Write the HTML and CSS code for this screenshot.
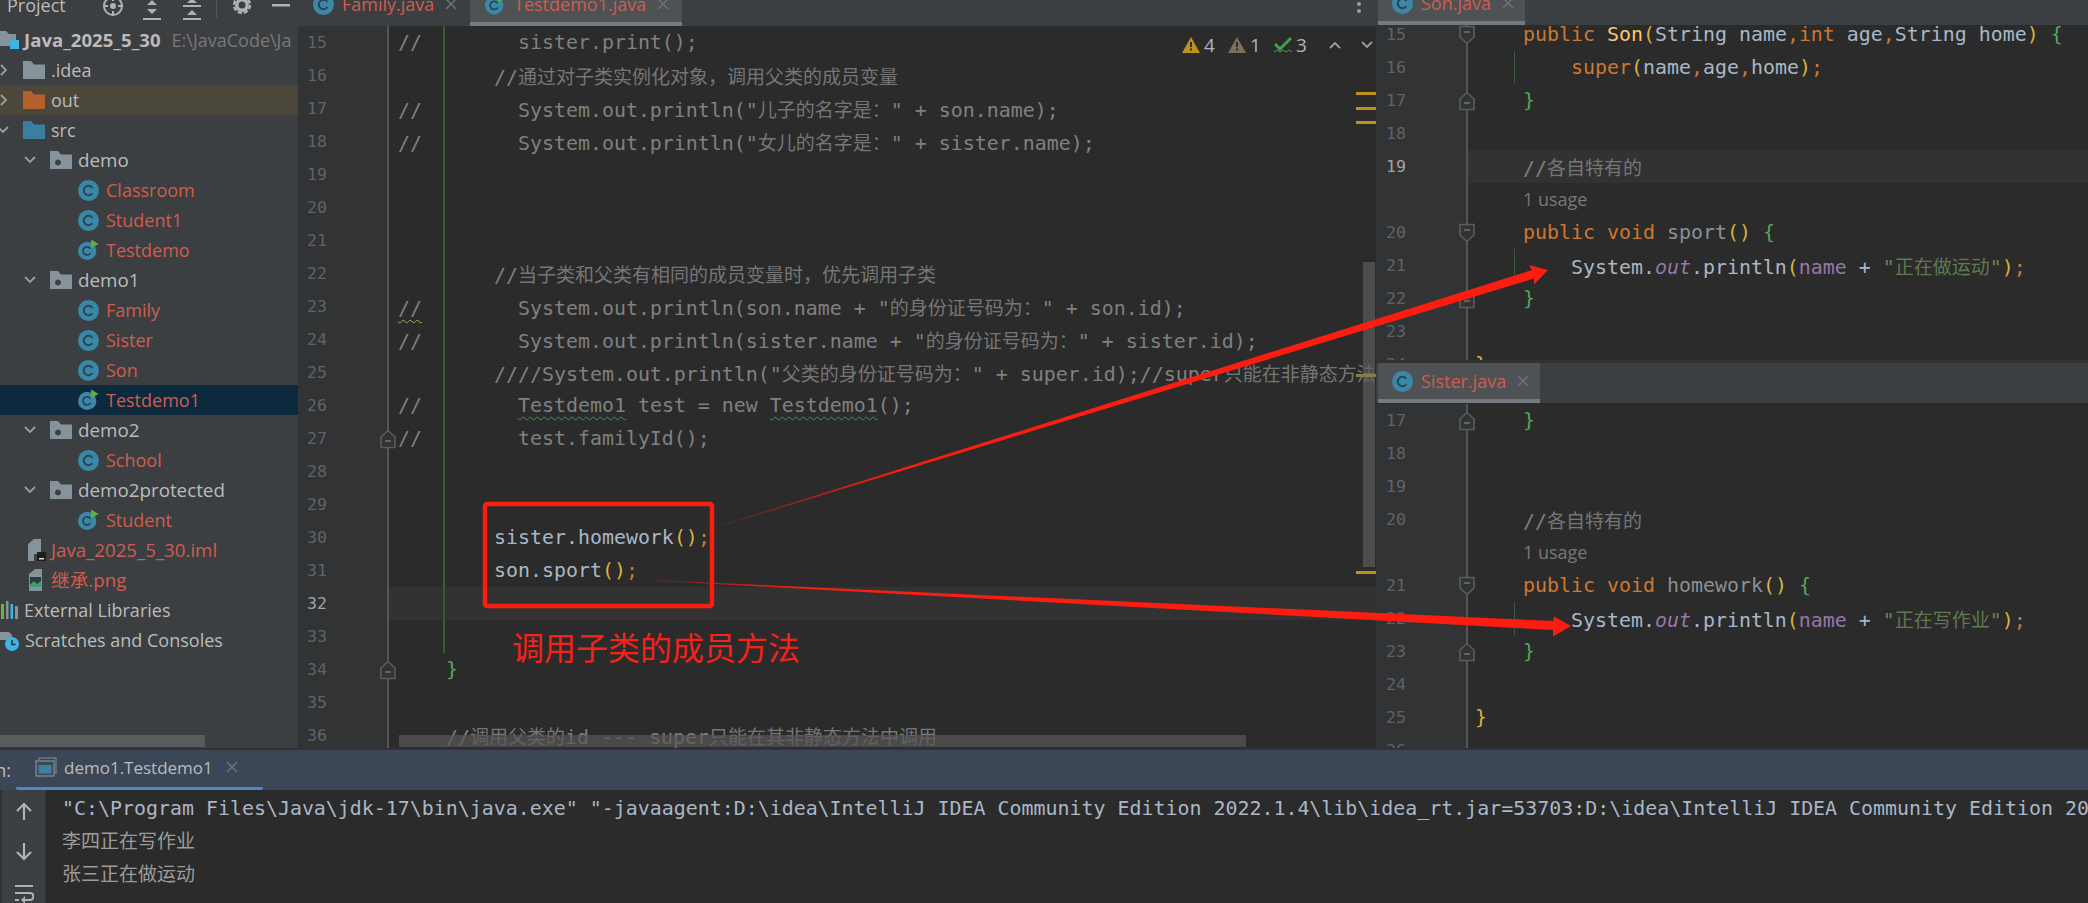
FILE: index.html
```html
<!DOCTYPE html>
<html lang="zh-CN">
<head>
<meta charset="utf-8">
<title>Java_2025_5_30</title>
<link rel="stylesheet" href="styles.css">
</head>
<body>
<svg class="defs" width="0" height="0" aria-hidden="true">
  <defs>
    <symbol id="cls" viewBox="0 0 21 21"><circle cx="10.5" cy="10.5" r="10.5" fill="#3a87a8"/><path d="M14.4 8a4.700 4.700 0 1 0 0 5" fill="none" stroke="#2a4655" stroke-width="2"/></symbol>
    <symbol id="clsrun" viewBox="0 0 24 24"><circle cx="10.5" cy="13" r="10.5" fill="#3a87a8"/><path d="M14.4 10.5a4.700 4.700 0 1 0 0 5" fill="none" stroke="#2a4655" stroke-width="2"/><path d="M15 0l8.500 5-8.500 5z" fill="#5fb13c"/></symbol>
    <symbol id="folder" viewBox="0 0 22 18"><path d="M0 0h8l3 3.500h11V18H0z"/></symbol>
    <symbol id="pkg" viewBox="0 0 22 18"><path fill-rule="evenodd" fill="#87939a" d="M0 0h8l3 3.500h11V18H0zM8 8.500a3 3 0 1 0 .01 0z"/></symbol>
    <symbol id="foldstart" viewBox="0 0 16 20"><path d="M1 1.500h14v10.500l-7 6.500-7-6.500z" fill="#313335" stroke="#5a5c5e" stroke-width="1.600"/><path d="M5 7h6" stroke="#6d6f71" stroke-width="1.600"/></symbol>
    <symbol id="foldend" viewBox="0 0 16 20"><path d="M1 18.500h14V8L8 1.500 1 8z" fill="#313335" stroke="#5a5c5e" stroke-width="1.600"/><path d="M5 12h6" stroke="#6d6f71" stroke-width="1.600"/></symbol>
    <symbol id="close" viewBox="0 0 12 12"><path d="M1 1l10 10M11 1L1 11" stroke="#6e7173" stroke-width="1.500"/></symbol>
    <symbol id="down" viewBox="0 0 12 8"><path d="M1 1l5 5 5-5" fill="none" stroke="#9a9da0" stroke-width="1.800"/></symbol>
    <symbol id="right" viewBox="0 0 8 12"><path d="M1 1l5 5-5 5" fill="none" stroke="#9a9da0" stroke-width="1.800"/></symbol>
    <symbol id="warn" viewBox="0 0 18 16"><path d="M9 0l9 16H0z"/><path d="M8 5h2v5H8zM8 11.500h2v2H8z" fill="#2b2b2b"/></symbol>
  </defs>
</svg>

<div class="app">
  <div class="workspace">
    <aside class="sidebar">
      <div class="side-head">
        <span class="side-title">Project</span>
        <svg class="ti t-target" width="22" height="22" viewBox="0 0 22 22"><circle cx="11" cy="11" r="9" fill="none" stroke="#afb1b3" stroke-width="2"/><circle cx="11" cy="11" r="3" fill="#afb1b3"/><path d="M11 1v5M11 16v5M1 11h5M16 11h5" stroke="#afb1b3" stroke-width="2"/></svg>
        <svg class="ti t-col" width="18" height="22" viewBox="0 0 18 22"><path d="M9 0l5 5H4zM9 14l-5-5h10zM0 18h18v2H0z" fill="#afb1b3"/></svg>
        <svg class="ti t-exp" width="18" height="22" viewBox="0 0 18 22"><path d="M0 5h18v2H0zM4 3h10L9-2zM9 10l5 5H4zM0 18h18v2H0z" fill="#afb1b3"/></svg>
        <span class="t-sep"></span>
        <svg class="ti t-gear" width="18" height="22" viewBox="0 0 18 22"><circle cx="9" cy="5" r="5.200" fill="none" stroke="#afb1b3" stroke-width="3.400"/><circle cx="9" cy="5" r="8" fill="none" stroke="#afb1b3" stroke-width="2.400" stroke-dasharray="4.300 2"/></svg>
        <svg class="ti t-min" width="18" height="22" viewBox="0 0 18 22"><path d="M0 4h18v2.500H0z" fill="#afb1b3"/></svg>
      </div>
      <div class="tree">
        <div class="node root"><svg class="ic-root" width="20" height="22" viewBox="0 0 20 22"><path d="M-2 2h8l3 3h7v12H-2z" fill="#87939a"/><rect x="10" y="11" width="9" height="9" fill="#3bb4e6"/></svg><span class="bold">Java_2025_5_30</span><span class="path">E:\JavaCode\Ja</span></div>
        <div class="node d1"><svg class="chev-r" width="8" height="12"><use href="#right"/></svg><svg class="fld f-grey" width="22" height="18"><use href="#folder"/></svg><span>.idea</span></div>
        <div class="node d1 excluded"><svg class="chev-r" width="8" height="12"><use href="#right"/></svg><svg class="fld f-orange" width="22" height="18"><use href="#folder"/></svg><span>out</span></div>
        <div class="node d1"><svg class="chev-d0" width="12" height="8"><use href="#down"/></svg><svg class="fld f-blue" width="22" height="18"><use href="#folder"/></svg><span>src</span></div>
        <div class="node d2"><svg class="chev-d" width="12" height="8"><use href="#down"/></svg><svg class="fld" width="22" height="18"><use href="#pkg"/></svg><span>demo</span></div>
        <div class="node d3"><svg class="cl" width="21" height="21"><use href="#cls"/></svg><span class="red">Classroom</span></div>
        <div class="node d3"><svg class="cl" width="21" height="21"><use href="#cls"/></svg><span class="red">Student1</span></div>
        <div class="node d3"><svg class="cl run" width="24" height="24"><use href="#clsrun"/></svg><span class="red">Testdemo</span></div>
        <div class="node d2"><svg class="chev-d" width="12" height="8"><use href="#down"/></svg><svg class="fld" width="22" height="18"><use href="#pkg"/></svg><span>demo1</span></div>
        <div class="node d3"><svg class="cl" width="21" height="21"><use href="#cls"/></svg><span class="red">Family</span></div>
        <div class="node d3"><svg class="cl" width="21" height="21"><use href="#cls"/></svg><span class="red">Sister</span></div>
        <div class="node d3"><svg class="cl" width="21" height="21"><use href="#cls"/></svg><span class="red">Son</span></div>
        <div class="node d3 selected"><svg class="cl run" width="24" height="24"><use href="#clsrun"/></svg><span class="red">Testdemo1</span></div>
        <div class="node d2"><svg class="chev-d" width="12" height="8"><use href="#down"/></svg><svg class="fld" width="22" height="18"><use href="#pkg"/></svg><span>demo2</span></div>
        <div class="node d3"><svg class="cl" width="21" height="21"><use href="#cls"/></svg><span class="red">School</span></div>
        <div class="node d2"><svg class="chev-d" width="12" height="8"><use href="#down"/></svg><svg class="fld" width="22" height="18"><use href="#pkg"/></svg><span>demo2protected</span></div>
        <div class="node d3"><svg class="cl run" width="24" height="24"><use href="#clsrun"/></svg><span class="red">Student</span></div>
        <div class="node file"><svg class="fi" width="20" height="24" viewBox="0 0 20 24"><path d="M2 6l6-5h7v15H8v7H2z" fill="#87939a"/><rect x="11" y="14" width="9" height="9" fill="#1e1e1e"/><path d="M13 20h5v1.500h-5z" fill="#ddd"/></svg><span class="red">Java_2025_5_30.iml</span></div>
        <div class="node file"><svg class="fi" width="20" height="24" viewBox="0 0 20 24"><path d="M2 6l6-5h7v22H2z" fill="#87939a" transform="translate(1)"/><rect x="4" y="9" width="11" height="10" fill="#2b3a3f"/><path d="M4 17l4-4 3 3 4-3v6H4z" fill="#3f9f6f"/></svg><span class="red cjk-side">继承.png</span></div>
        <div class="node top-item"><svg class="ext" width="18" height="18" viewBox="0 0 18 18"><path d="M1 3h3v15H1z" fill="#6eb23c"/><path d="M6 0h2.500v18H6z" fill="#87939a"/><path d="M10.500 3H13v15h-2.500z" fill="#3bb4e6"/><path d="M15 5h3v13h-3z" fill="#87939a"/></svg><span>External Libraries</span></div>
        <div class="node top-item"><svg class="ext" width="19" height="22" viewBox="0 0 19 22"><path d="M-1 3h10l3 3v5H-1z" fill="#87939a"/><circle cx="12" cy="15" r="7" fill="#3bb4e6"/><path d="M12 11v4.500h3.500" fill="none" stroke="#2b2b2b" stroke-width="1.500"/></svg><span>Scratches and Consoles</span></div>
      </div>
      <div class="side-hscroll"></div>
    </aside>

    <section class="main-editor">
      <div class="tabbar main-tabs">
        <div class="tab tab-family"><svg class="tab-ic" width="21" height="21"><use href="#cls"/></svg><span class="red">Family.java</span><svg class="tab-x" width="12" height="12"><use href="#close"/></svg></div>
        <div class="tab tab-test on"><svg class="tab-ic" width="21" height="21"><use href="#clsrun"/></svg><span class="red">Testdemo1.java</span><svg class="tab-x" width="12" height="12"><use href="#close"/></svg></div>
        <svg class="dots" width="6" height="14" viewBox="0 0 6 14"><circle cx="3" cy="3" r="2" fill="#9a9da0"/><circle cx="3" cy="10" r="2" fill="#9a9da0"/></svg>
      </div>
      <div class="code-view main-view">
        <div class="row guide"><div class="gut">15</div><div class="code com">//        sister.print();</div></div>
        <div class="row guide"><div class="gut">16</div><div class="code com">        //<span class="c">通过对子类实例化对象，调用父类的成员变量</span></div></div>
        <div class="row guide"><div class="gut">17</div><div class="code com">//        System.out.println("<span class="c">儿子的名字是：</span>" + son.name);</div></div>
        <div class="row guide"><div class="gut">18</div><div class="code com">//        System.out.println("<span class="c">女儿的名字是：</span>" + sister.name);</div></div>
        <div class="row guide"><div class="gut">19</div><div class="code"></div></div>
        <div class="row guide"><div class="gut">20</div><div class="code"></div></div>
        <div class="row guide"><div class="gut">21</div><div class="code"></div></div>
        <div class="row guide"><div class="gut">22</div><div class="code com">        //<span class="c">当子类和父类有相同的成员变量时，优先调用子类</span></div></div>
        <div class="row guide"><div class="gut">23</div><div class="code com"><span class="wy">//</span>        System.out.println(son.name + "<span class="c">的身份证号码为：</span>" + son.id);</div></div>
        <div class="row guide"><div class="gut">24</div><div class="code com">//        System.out.println(sister.name + "<span class="c">的身份证号码为：</span>" + sister.id);</div></div>
        <div class="row guide"><div class="gut">25</div><div class="code com">        ////System.out.println("<span class="c">父类的身份证号码为：</span>" + super.id);//super<span class="c">只能在非静态方法中调用</span></div></div>
        <div class="row guide"><div class="gut">26</div><div class="code com">//        <span class="wg">Testdemo1</span> test = new <span class="wg">Testdemo1</span>();</div></div>
        <div class="row guide"><div class="gut">27<svg class="fold" width="16" height="20"><use href="#foldend"/></svg></div><div class="code com">//        test.familyId();</div></div>
        <div class="row guide"><div class="gut">28</div><div class="code"></div></div>
        <div class="row guide"><div class="gut">29</div><div class="code"></div></div>
        <div class="row guide"><div class="gut">30</div><div class="code">        sister.homework<span class="y">()</span><span class="k">;</span></div></div>
        <div class="row guide"><div class="gut">31</div><div class="code">        son.sport<span class="y">()</span><span class="k">;</span></div></div>
        <div class="row guide cur"><div class="gut">32</div><div class="code"></div></div>
        <div class="row guide"><div class="gut">33</div><div class="code"></div></div>
        <div class="row"><div class="gut">34<svg class="fold" width="16" height="20"><use href="#foldend"/></svg></div><div class="code">    <span class="g">}</span></div></div>
        <div class="row"><div class="gut">35</div><div class="code"></div></div>
        <div class="row"><div class="gut">36</div><div class="code com">    //<span class="c">调用父类的</span>id --- super<span class="c">只能在其非静态方法中调用</span></div></div>
      </div>
      <div class="inspect">
        <svg class="w-y" width="18" height="16"><use href="#warn"/></svg><span class="cnt c4">4</span>
        <svg class="w-b" width="18" height="16"><use href="#warn"/></svg><span class="cnt c1">1</span>
        <svg class="chk" width="18" height="19" viewBox="0 0 18 19"><path d="M1 8l5 5L17 2" fill="none" stroke="#499c54" stroke-width="3"/><path d="M0 16l3-2 3 2 3-2 3 2 3-2 3 2" fill="none" stroke="#499c54" stroke-width="1"/></svg><span class="cnt c3">3</span>
        <svg class="ch-up" width="12" height="8" viewBox="0 0 12 8"><path d="M1 7l5-5 5 5" fill="none" stroke="#9a9da0" stroke-width="1.800"/></svg>
        <svg class="ch-dn" width="12" height="8"><use href="#down"/></svg>
      </div>
      <span class="mark m1"></span><span class="mark m2"></span><span class="mark m3"></span><span class="mark m4"></span><span class="mark m5"></span>
      <div class="vthumb"></div>
      <div class="hthumb"></div>
    </section>

    <section class="right-col">
      <div class="split split-top">
        <div class="tabbar right-tabs">
          <div class="tab tab-son on"><svg class="tab-ic" width="21" height="21"><use href="#cls"/></svg><span class="red">Son.java</span><svg class="tab-x" width="12" height="12"><use href="#close"/></svg></div>
        </div>
        <div class="code-view side-view">
          <div class="inner up">
            <div class="row"><div class="gut">15<svg class="fold" width="16" height="20"><use href="#foldstart"/></svg></div><div class="code">    <span class="k">public</span> <span class="m">Son</span><span class="y">(</span>String name<span class="k">,</span><span class="k">int</span> age<span class="k">,</span>String home<span class="y">)</span> <span class="g">{</span></div></div>
            <div class="row"><div class="gut">16</div><div class="code chg">        <span class="k">super</span><span class="y">(</span>name<span class="k">,</span>age<span class="k">,</span>home<span class="y">)</span><span class="k">;</span></div></div>
            <div class="row"><div class="gut">17<svg class="fold" width="16" height="20"><use href="#foldend"/></svg></div><div class="code">    <span class="g">}</span></div></div>
            <div class="row"><div class="gut">18</div><div class="code"></div></div>
            <div class="row cur"><div class="gut">19</div><div class="code com">    //<span class="c">各自特有的</span></div></div>
            <div class="row"><div class="gut"></div><div class="code">    <span class="usage">1 usage</span></div></div>
            <div class="row"><div class="gut">20<svg class="fold" width="16" height="20"><use href="#foldstart"/></svg></div><div class="code">    <span class="k">public</span> <span class="k">void</span> <span class="dim">sport</span><span class="y">()</span> <span class="g">{</span></div></div>
            <div class="row"><div class="gut">21</div><div class="code chg">        System.<span class="f fi-out">out</span>.println<span class="y">(</span><span class="f">name</span> + <span class="s">"<span class="c">正在做运动</span>"</span><span class="y">)</span><span class="k">;</span></div></div>
            <div class="row"><div class="gut">22<svg class="fold" width="16" height="20"><use href="#foldend"/></svg></div><div class="code">    <span class="g">}</span></div></div>
            <div class="row"><div class="gut">23</div><div class="code"></div></div>
            <div class="row"><div class="gut">24</div><div class="code"><span class="y">}</span></div></div>
          </div>
        </div>
      </div>
      <div class="split split-bottom">
        <div class="tabbar right-tabs tall">
          <div class="tab tab-sister on"><svg class="tab-ic" width="21" height="21"><use href="#cls"/></svg><span class="red">Sister.java</span><svg class="tab-x" width="12" height="12"><use href="#close"/></svg></div>
        </div>
        <div class="code-view side-view">
          <div class="inner down">
            <div class="row"><div class="gut">17<svg class="fold" width="16" height="20"><use href="#foldend"/></svg></div><div class="code">    <span class="g">}</span></div></div>
            <div class="row"><div class="gut">18</div><div class="code"></div></div>
            <div class="row"><div class="gut">19</div><div class="code"></div></div>
            <div class="row"><div class="gut">20</div><div class="code com">    //<span class="c">各自特有的</span></div></div>
            <div class="row"><div class="gut"></div><div class="code">    <span class="usage">1 usage</span></div></div>
            <div class="row"><div class="gut">21<svg class="fold" width="16" height="20"><use href="#foldstart"/></svg></div><div class="code">    <span class="k">public</span> <span class="k">void</span> <span class="dim">homework</span><span class="y">()</span> <span class="g">{</span></div></div>
            <div class="row"><div class="gut">22</div><div class="code chg">        System.<span class="f fi-out">out</span>.println<span class="y">(</span><span class="f">name</span> + <span class="s">"<span class="c">正在写作业</span>"</span><span class="y">)</span><span class="k">;</span></div></div>
            <div class="row"><div class="gut">23<svg class="fold" width="16" height="20"><use href="#foldend"/></svg></div><div class="code">    <span class="g">}</span></div></div>
            <div class="row"><div class="gut">24</div><div class="code"></div></div>
            <div class="row"><div class="gut">25</div><div class="code"><span class="y">}</span></div></div>
            <div class="row"><div class="gut">26</div><div class="code"></div></div>
          </div>
        </div>
      </div>
    </section>
  </div>

  <section class="run-panel">
    <div class="run-tabs">
      <span class="run-label">Run:</span>
      <div class="run-tab">
        <svg width="22" height="20" viewBox="0 0 22 20"><path d="M4 3V1h17v15h-2" fill="none" stroke="#6e7880" stroke-width="1.500"/><rect x="1" y="4" width="18" height="15" fill="#3a4a55" stroke="#76828a" stroke-width="1.500"/><rect x="3.500" y="8" width="13" height="8.500" fill="#3f7f9f"/></svg>
        <span class="run-name">demo1.Testdemo1</span>
        <svg class="tab-x" width="12" height="12"><use href="#close"/></svg>
      </div>
    </div>
    <div class="run-body">
      <div class="run-tools">
        <svg width="16" height="18" viewBox="0 0 16 18"><path d="M8 18V2M1 9l7-7 7 7" fill="none" stroke="#afb1b3" stroke-width="2.200"/></svg>
        <svg width="16" height="18" viewBox="0 0 16 18"><path d="M8 0v16M1 9l7 7 7-7" fill="none" stroke="#afb1b3" stroke-width="2.200"/></svg>
        <svg width="20" height="20" viewBox="0 0 20 20"><path d="M1 2h18M1 9h15a3 3 0 0 1 0 7H9M1 16h4" fill="none" stroke="#afb1b3" stroke-width="2.200"/><path d="M11 12l-4 4 4 4z" fill="#afb1b3"/></svg>
      </div>
      <div class="console">
        <div class="cline">"C:\Program Files\Java\jdk-17\bin\java.exe" "-javaagent:D:\idea\IntelliJ IDEA Community Edition 2022.1.4\lib\idea_rt.jar=53703:D:\idea\IntelliJ IDEA Community Edition 2022.1.4\bin"</div>
        <div class="cline c">李四正在写作业</div>
        <div class="cline c">张三正在做运动</div>
      </div>
    </div>
  </section>
</div>

<svg class="annot" width="2088" height="903" viewBox="0 0 2088 903" aria-hidden="true">
  <defs>
    <linearGradient id="fade1" gradientUnits="userSpaceOnUse" x1="719" y1="526" x2="900" y2="470"><stop offset="0" stop-color="#fb1d10" stop-opacity=".25"/><stop offset="1" stop-color="#fb1d10"/></linearGradient>
    <linearGradient id="fade2" gradientUnits="userSpaceOnUse" x1="652" y1="580" x2="800" y2="587"><stop offset="0" stop-color="#fb1d10" stop-opacity=".3"/><stop offset="1" stop-color="#fb1d10"/></linearGradient>
  </defs>
  <rect x="485" y="504" width="227" height="102" rx="2" fill="none" stroke="#fb1d10" stroke-width="4.500"/>
  <polygon points="719,526 1532,270 1529,265 1548,270 1534,284.500 1534,278.500 719,526.500" fill="url(#fade1)"/>
  <polygon points="652,580 1553,621 1554,616.500 1571,626 1553,636.500 1553,630 652,580.500" fill="url(#fade2)"/>
</svg>
<div class="note">调用子类的成员方法</div>
</body>
</html>
```
FILE: styles.css
```css
* { box-sizing: border-box; }
html, body { margin: 0; padding: 0; width: 2088px; height: 903px; overflow: hidden; background: #2b2b2b; }
body { position: relative; font-family: "Open Sans", "Noto Sans CJK SC", sans-serif; color: #bbbbbb; }
.defs { position: absolute; }
.app { display: flex; flex-direction: column; width: 2088px; height: 903px; }
.workspace { display: flex; height: 750px; background: #323232; }

/* Project sidebar */
.sidebar { width: 298px; height: 748px; background: #3c3f41; position: relative; overflow: hidden; font-size: 18px; flex: none; }
.side-head { height: 25px; display: flex; align-items: flex-start; position: relative; overflow: hidden; }
.side-title { margin: -9px 0 0 7px; line-height: 28px; width: 95px; font-size: 18px; }
.ti { flex: none; margin-top: -5px; overflow: visible; }
.t-col { margin-left: 19px; margin-top: 0; }
.t-exp { margin-left: 22px; margin-top: 0; }
.t-target { margin-top: -5px; }
.t-sep { width: 1px; height: 18px; background: #55585a; margin-left: 15px; flex: none; }
.t-gear { margin-left: 16px; margin-top: 0; }
.t-min { margin-left: 21px; margin-top: 0; }
.tree { display: flex; flex-direction: column; }
.node { height: 30px; display: flex; align-items: center; white-space: pre; line-height: 30px; flex: none; }
.node svg { flex: none; }
.red { color: #d05c50; }
.bold { font-weight: 700; font-size: 18.600px; margin-left: 4px; }
.path { color: #787878; margin-left: 11px; }
.root { padding-left: 0; }
.d1 { padding-left: 0; }
.chev-r { margin-left: 0; margin-right: 15px; }
.chev-d0 { margin-left: -3px; margin-right: 14px; }
.d1 span { margin-left: 6px; }
.d2 { padding-left: 24px; }
.chev-d { margin-right: 14px; }
.d2 span { margin-left: 6px; font-size: 18.800px; }
.d3 { padding-left: 78px; }
.d3 span { margin-left: 7px; }
.d3 .cl { width: 21px; }
.d3 .run { width: 21px; height: 24px; overflow: visible; }
.f-grey { fill: #87939a; }
.f-orange { fill: #b5602d; }
.f-blue { fill: #3a7f9f; }
.excluded { background: #4b473b; }
.selected { background: #0d293e; }
.file { padding-left: 26px; }
.file span { margin-left: 5px; font-size: 18.700px; }
.top-item { padding-left: 0; }
.top-item span { margin-left: 6px; }
.side-hscroll { position: absolute; left: 0; top: 735px; width: 205px; height: 12px; background: #5a5b5c; }

/* Tabs */
.tabbar { background: #3c3f41; display: flex; overflow: hidden; position: relative; flex: none; }
.main-tabs { height: 26px; }
.right-tabs { height: 25px; padding-left: 2px; }
.right-tabs.tall { height: 40px; }
.tab { height: 40px; flex: none; display: flex; align-items: center; padding-bottom: 4px; font-size: 18px; }
.main-tabs .tab { margin-top: -14px; }
.split-top .tab { margin-top: -15px; }
.tab.on { background: #4e5254; border-bottom: 4px solid #747a80; padding-bottom: 0; }
.tab-ic { margin-right: 8px; flex: none; overflow: visible; }
.tab-x { margin-left: 11px; flex: none; }
.tab-family { width: 172px; padding-left: 15px; }
.tab-test { width: 212px; padding-left: 15px; }
.tab-son { width: 147px; padding-left: 14px; }
.tab-sister { width: 162px; padding-left: 14px; }
.dots { position: absolute; left: 1058px; top: 1px; }

/* Code */
.main-editor { width: 1078px; height: 748px; position: relative; overflow: hidden; background: #2b2b2b; flex: none; }
.right-col { width: 712px; height: 748px; display: flex; flex-direction: column; gap: 3px; flex: none; }
.split { display: flex; flex-direction: column; overflow: hidden; background: #2b2b2b; }
.split-top { height: 360px; }
.split-bottom { height: 385px; }
.code-view { overflow: hidden; background: #2b2b2b; flex: 1; }
.main-view { height: 722px; }
.inner.up { margin-top: -7px; }
.inner.down { margin-top: 1px; }
.row { display: flex; height: 33px; font-family: "DejaVu Sans Mono", "Noto Sans CJK SC", monospace; font-size: 19.930px; line-height: 33px; color: #a9b7c6; white-space: pre; }
.gut { position: relative; flex: none; background: #313335; border-right: 2px solid #555555; color: #606366; font-size: 16.600px; }
.main-view .gut { width: 91px; padding-left: 9px; }
.side-view .gut { width: 92px; padding-left: 10px; }
.code { flex: 1; min-width: 0; overflow: visible; background-repeat: no-repeat; }
.main-view .code { padding-left: 9px; }
.side-view .code { padding-left: 7px; }
.guide .code { background-image: linear-gradient(#3c5a3a, #3c5a3a); background-size: 2px 100%; background-position: 54px 0; }
.chg { background-image: linear-gradient(#3c5a3a, #3c5a3a); background-size: 1px 100%; background-position: 46px 0; }
.cur .code { background-color: #323232; }
.cur .gut { color: #a4a3a3; }
.fold { position: absolute; right: -9px; top: 7px; }
.com { color: #808080; }
.c { font-family: "Noto Sans CJK SC", sans-serif; font-size: 19px; }
.com .c { color: #767676; }
.k { color: #cc7832; }
.y { color: #d9b23c; }
.g { color: #54a857; }
.m { color: #ffc66d; }
.f { color: #9876aa; }
.fi-out { font-style: italic; }
.s { color: #6a8759; }
.s .c { color: #5f7a50; }
.dim { color: #8a9095; }
.usage { font-family: "Open Sans", sans-serif; font-size: 18px; color: #787878; }
.wy { text-decoration: underline wavy #a8a860 1px; text-underline-offset: 4px; }
.wg { text-decoration: underline wavy #3f9a4c 1px; text-underline-offset: 4px; }

/* Inspection widget and stripes */
.inspect { position: absolute; left: 884px; top: 36px; display: flex; align-items: center; height: 18px; font-size: 19px; color: #a9b7c6; }
.inspect svg { flex: none; }
.w-y { fill: #be9117; }
.w-b { fill: #7b7058; margin-left: 13px; }
.chk { margin-left: 13px; }
.cnt { margin-left: 4px; line-height: 18px; width: 11px; font-family: "Open Sans", sans-serif; }
.ch-up { margin-left: 22px; }
.ch-dn { margin-left: 20px; }
.mark { position: absolute; left: 1058px; width: 20px; height: 3px; background: #be9117; z-index: 2; }
.m1 { top: 92px; }
.m2 { top: 107px; }
.m3 { top: 121px; }
.m4 { top: 374px; background: #8a7a4e; }
.m5 { top: 571px; }
.vthumb { position: absolute; left: 1065px; top: 262px; width: 12px; height: 305px; background: rgba(93, 93, 93, .7); z-index: 1; }
.hthumb { position: absolute; left: 101px; top: 735px; width: 847px; height: 12px; background: rgba(88, 88, 88, .7); }

/* Run panel */
.run-panel { height: 153px; display: flex; flex-direction: column; overflow: hidden; flex: none; }
.run-tabs { height: 40px; background: #3b4757; display: flex; align-items: center; flex: none; }
.run-label { width: 16px; text-indent: -27px; white-space: nowrap; overflow: hidden; font-size: 18px; line-height: 40px; flex: none; }
.run-tab { width: 247px; height: 40px; padding: 0 0 3px 19px; display: flex; align-items: center; border-bottom: 3px solid #4a88c7; border-radius: 0 0 2px 2px; font-size: 17px; flex: none; }
.run-name { margin-left: 7px; }
.run-tab .tab-x { margin-left: 13px; }
.run-body { display: flex; flex: 1; min-height: 0; }
.run-tools { width: 46px; flex: none; background: #3c3f41; border-left: 2px solid #323232; border-right: 1px solid #323232; display: flex; flex-direction: column; align-items: center; gap: 23px; padding-top: 12px; }
.run-tools svg { flex: none; }
.console { flex: 1; min-width: 0; padding: 2px 0 0 16px; background: #2b2b2b; overflow: hidden; }
.cline { height: 33px; line-height: 33px; white-space: pre; font-family: "DejaVu Sans Mono", "Noto Sans CJK SC", monospace; font-size: 19.930px; color: #a9b7c6; }
.cline.c { font-family: "Noto Sans CJK SC", sans-serif; font-size: 19px; line-height: 29px; color: #9c9c9c; }

/* Hand-drawn annotations on top of the screenshot */
.annot { position: absolute; left: 0; top: 0; z-index: 5; pointer-events: none; }
.note { position: absolute; left: 512px; top: 623px; z-index: 6; font-family: "Noto Sans CJK SC", sans-serif; font-size: 32px; line-height: 46px; color: #f5211a; white-space: nowrap; }
```
